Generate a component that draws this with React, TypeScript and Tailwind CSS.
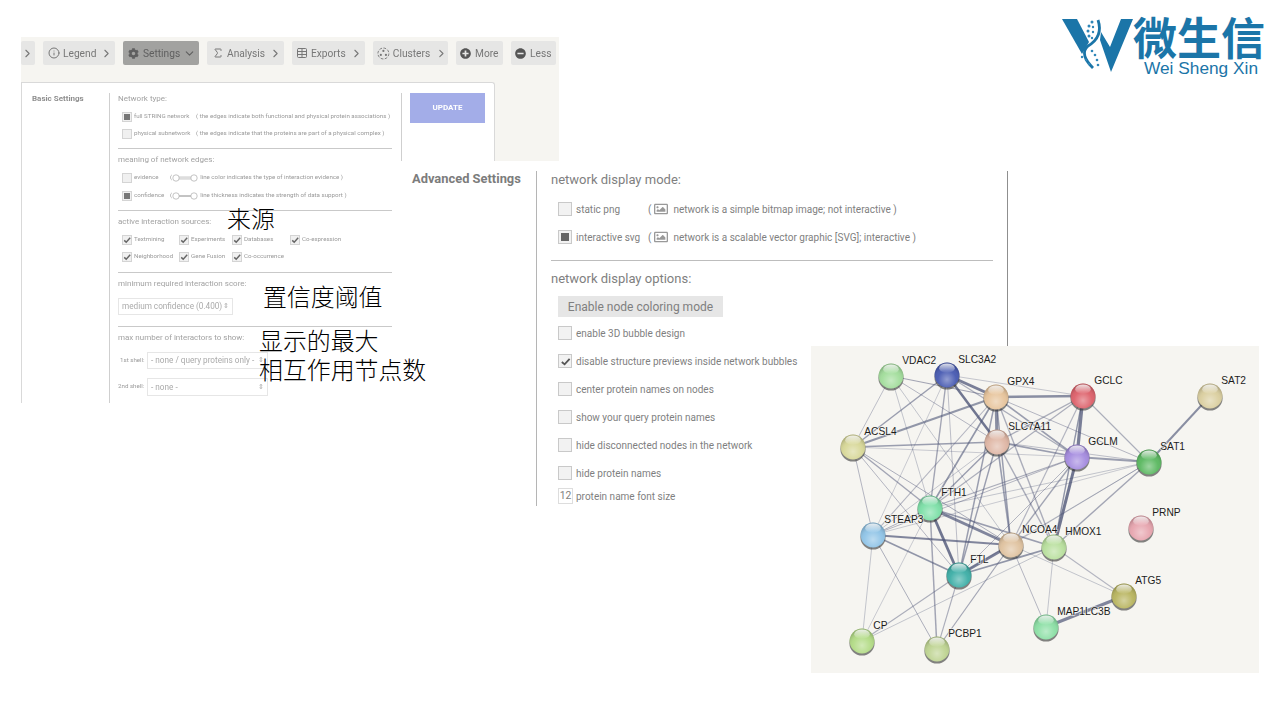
import { ChevronDown, ChevronRight, Info, Sigma, Table } from "lucide-react";
import { FaCog, FaMinusCircle, FaPlusCircle, FaRegImage } from "react-icons/fa";
import type { ReactNode } from "react";

const nodes: Record<string, { x: number; y: number; color: string }> = {
  VDAC2: { x: 891, y: 376, color: "#9fdc98" },
  SLC3A2: { x: 947, y: 375, color: "#4356b0" },
  GPX4: { x: 996, y: 397, color: "#e6c298" },
  GCLC: { x: 1083, y: 396, color: "#dc5c66" },
  SAT2: { x: 1210, y: 396, color: "#d9cd9c" },
  ACSL4: { x: 853, y: 447, color: "#d6d694" },
  SLC7A11: { x: 997, y: 442, color: "#deb4a2" },
  GCLM: { x: 1077, y: 457, color: "#a288de" },
  SAT1: { x: 1149, y: 462, color: "#56b65c" },
  FTH1: { x: 930, y: 508, color: "#78dea4" },
  STEAP3: { x: 873, y: 535, color: "#8cc2e6" },
  FTL: { x: 959, y: 575, color: "#38aca4" },
  NCOA4: { x: 1011, y: 545, color: "#dec09c" },
  HMOX1: { x: 1054, y: 547, color: "#b6de9a" },
  PRNP: { x: 1141, y: 528, color: "#e6a2ac" },
  ATG5: { x: 1124, y: 596, color: "#b6b25a" },
  MAP1LC3B: { x: 1046, y: 627, color: "#88dea2" },
  CP: { x: 862, y: 641, color: "#b0da82" },
  PCBP1: { x: 937, y: 649, color: "#bcd28e" },
};

// from, to, line width, opacity
const edges: [string, string, number, number][] = [
  ["SLC3A2", "GPX4", 3, 0.75],
  ["SLC3A2", "SLC7A11", 2.5, 0.8],
  ["GPX4", "SLC7A11", 3, 0.65],
  ["GCLC", "GCLM", 3.2, 0.75],
  ["GCLM", "HMOX1", 3, 0.8],
  ["GCLC", "HMOX1", 1.4, 0.6],
  ["GPX4", "GCLC", 2.4, 0.65],
  ["FTH1", "NCOA4", 3, 0.7],
  ["FTH1", "FTL", 2.8, 0.8],
  ["FTL", "NCOA4", 3, 0.75],
  ["FTL", "HMOX1", 1.8, 0.6],
  ["STEAP3", "NCOA4", 2, 0.7],
  ["STEAP3", "FTL", 1.6, 0.6],
  ["STEAP3", "FTH1", 1, 0.45],
  ["SAT1", "SAT2", 2, 0.65],
  ["ATG5", "MAP1LC3B", 3, 0.7],
  ["ACSL4", "GPX4", 2, 0.6],
  ["ACSL4", "SLC7A11", 1.6, 0.55],
  ["ACSL4", "FTH1", 1.4, 0.5],
  ["ACSL4", "NCOA4", 1, 0.45],
  ["ACSL4", "FTL", 1, 0.4],
  ["ACSL4", "STEAP3", 1, 0.4],
  ["ACSL4", "GCLM", 0.9, 0.3],
  ["FTH1", "GPX4", 1.6, 0.6],
  ["FTH1", "SLC7A11", 1.4, 0.55],
  ["FTH1", "HMOX1", 1.6, 0.55],
  ["FTH1", "GCLC", 1.2, 0.45],
  ["FTH1", "GCLM", 1.2, 0.45],
  ["FTH1", "SAT1", 0.9, 0.35],
  ["FTL", "GPX4", 1.5, 0.55],
  ["FTL", "SLC7A11", 1.4, 0.55],
  ["FTL", "GCLM", 1, 0.4],
  ["FTL", "SAT1", 0.9, 0.35],
  ["VDAC2", "ACSL4", 1, 0.35],
  ["VDAC2", "GPX4", 1.2, 0.5],
  ["VDAC2", "SLC7A11", 1, 0.4],
  ["VDAC2", "FTH1", 0.9, 0.35],
  ["VDAC2", "NCOA4", 0.9, 0.35],
  ["SLC3A2", "ACSL4", 1.5, 0.55],
  ["SLC3A2", "FTH1", 1.4, 0.5],
  ["SLC3A2", "FTL", 1, 0.35],
  ["SLC3A2", "GCLC", 1, 0.3],
  ["SLC3A2", "GCLM", 1.2, 0.45],
  ["SLC3A2", "STEAP3", 0.9, 0.3],
  ["GPX4", "GCLM", 1.6, 0.55],
  ["GPX4", "NCOA4", 1.5, 0.55],
  ["GPX4", "STEAP3", 1.1, 0.4],
  ["GPX4", "SAT1", 1, 0.4],
  ["GPX4", "HMOX1", 1.4, 0.45],
  ["SLC7A11", "GCLC", 1.4, 0.45],
  ["SLC7A11", "GCLM", 1.6, 0.55],
  ["SLC7A11", "NCOA4", 1.6, 0.55],
  ["SLC7A11", "HMOX1", 1.4, 0.45],
  ["SLC7A11", "STEAP3", 0.9, 0.35],
  ["SLC7A11", "SAT1", 1, 0.35],
  ["GCLC", "SAT1", 1.1, 0.45],
  ["GCLC", "NCOA4", 1.2, 0.4],
  ["GCLM", "SAT1", 1.8, 0.55],
  ["GCLM", "NCOA4", 1.4, 0.5],
  ["GCLM", "STEAP3", 1, 0.4],
  ["SAT1", "NCOA4", 1, 0.35],
  ["SAT1", "STEAP3", 0.9, 0.3],
  ["SAT1", "HMOX1", 1.4, 0.5],
  ["STEAP3", "CP", 0.9, 0.35],
  ["STEAP3", "PCBP1", 1, 0.45],
  ["CP", "FTH1", 0.9, 0.3],
  ["CP", "FTL", 1.1, 0.45],
  ["CP", "HMOX1", 0.9, 0.35],
  ["PCBP1", "FTH1", 1.5, 0.5],
  ["PCBP1", "FTL", 1.1, 0.45],
  ["PCBP1", "NCOA4", 1.2, 0.5],
  ["HMOX1", "ATG5", 1.1, 0.4],
  ["NCOA4", "ATG5", 0.9, 0.35],
  ["NCOA4", "MAP1LC3B", 1, 0.4],
  ["HMOX1", "MAP1LC3B", 0.9, 0.35],
];

function Network() {
  return (
    <svg viewBox="811 346 448 327" className="absolute left-[811px] top-[346px] h-[327px] w-[448px] bg-[#f6f5f1]">
      <defs>
        <radialGradient id="body" cx="0.5" cy="0.68" r="0.62">
          <stop offset="0" stopColor="#fff" stopOpacity="0.42" />
          <stop offset="0.6" stopColor="#fff" stopOpacity="0.06" />
          <stop offset="1" stopColor="#000" stopOpacity="0.2" />
        </radialGradient>
        <linearGradient id="gloss" x1="0" y1="0" x2="0" y2="1">
          <stop offset="0" stopColor="#fff" stopOpacity="0.85" />
          <stop offset="1" stopColor="#fff" stopOpacity="0" />
        </linearGradient>
      </defs>
      {edges.map(([a, b, w, o]) => (
        <line
          key={a + b}
          x1={nodes[a].x}
          y1={nodes[a].y}
          x2={nodes[b].x}
          y2={nodes[b].y}
          stroke="#4f5678"
          strokeWidth={w}
          strokeOpacity={o}
        />
      ))}
      {Object.entries(nodes).map(([name, n]) => (
        <g key={name}>
          <circle cx={n.x} cy={n.y + 2} r={12.6} fill="#333" fillOpacity={0.6} />
          <circle cx={n.x} cy={n.y} r={12.4} fill={n.color} />
          <circle cx={n.x} cy={n.y} r={12.4} fill="url(#body)" />
          <ellipse cx={n.x} cy={n.y - 6.8} rx={7.8} ry={4.8} fill="url(#gloss)" />
        </g>
      ))}
      {Object.entries(nodes).map(([name, n]) => (
        <text
          key={name}
          x={n.x + 11.3}
          y={n.y - 12}
          fontSize="10.2"
          fontFamily="'Liberation Sans', sans-serif"
          fill="#1c1c1c"
          stroke="#f6f5f1"
          strokeOpacity="0.7"
          strokeWidth="1.6"
          paintOrder="stroke"
        >
          {name}
        </text>
      ))}
    </svg>
  );
}

function Logo() {
  return (
    <div className="absolute left-[1062px] top-[12px] h-[68px] w-[206px] text-[#1b75a8]">
      <svg viewBox="1062 12 72 66" className="absolute left-0 top-0 h-[66px] w-[72px]">
        <path d="M1062 19h15l12 23-7 12z" fill="#1b75a8" />
        <path d="M1133 19h-12l-11 28-9-15-1 8 11 32z" fill="#1b75a8" />
        <path d="M1098 20c4 12 0 20-10 26-7 6-3 14 5 22" fill="none" stroke="#1b75a8" strokeWidth="2.8" />
        <g fill="#2f86b8">
          <circle cx="1092" cy="22" r="1.5" />
          <circle cx="1089" cy="26" r="1.5" />
          <circle cx="1093" cy="27" r="1.2" />
          <circle cx="1088" cy="31" r="1.5" />
          <circle cx="1093" cy="32" r="1.2" />
          <circle cx="1089" cy="36" r="1.5" />
          <circle cx="1092" cy="38" r="1.2" />
          <circle cx="1082" cy="57" r="1.2" />
          <circle cx="1092" cy="51" r="1.3" />
          <circle cx="1095" cy="55" r="1.3" />
          <circle cx="1086" cy="60" r="1.2" />
          <circle cx="1097" cy="60" r="1.3" />
          <circle cx="1089" cy="64" r="1.2" />
          <circle cx="1098" cy="65" r="1.3" />
        </g>
      </svg>
      <div className="absolute left-[71px] top-[2px] whitespace-nowrap text-[44px] font-bold leading-[44px] [font-family:'Noto_Sans_CJK_SC',sans-serif]">
        微生信
      </div>
      <div className="absolute left-[82px] top-[47px] whitespace-nowrap text-[17.3px] leading-[18px] [font-family:'Liberation_Sans',sans-serif]">
        Wei Sheng Xin
      </div>
    </div>
  );
}

function ToolButton({ className, children }: { className: string; children: ReactNode }) {
  return (
    <div className={`flex h-[24px] items-center rounded-[2px] bg-[#e6e6e5] text-[10.2px] text-[#777] [&>span]:pt-[2px] ${className}`}>
      {children}
    </div>
  );
}

function ClusterIcon() {
  return (
    <svg viewBox="0 0 14 14" className="size-[13px]" fill="none" stroke="#777">
      <circle cx="7" cy="7" r="6" strokeDasharray="3 1.6" />
      <circle cx="7" cy="4.2" r="1.2" fill="#777" stroke="none" />
      <circle cx="4.2" cy="8.6" r="1.2" fill="#777" stroke="none" />
      <circle cx="9.8" cy="8.6" r="1.2" fill="#777" stroke="none" />
    </svg>
  );
}

function Toolbar() {
  return (
    <div className="flex h-[45px] gap-2 pt-[4px]">
      <ToolButton className="w-[14px]">
        <ChevronRight className="size-[13px]" />
      </ToolButton>
      <ToolButton className="w-[72px] pl-[5px]">
        <Info className="size-[12px]" />
        <span className="ml-[3px]">Legend</span>
        <ChevronRight className="ml-[4px] size-[13px]" />
      </ToolButton>
      <ToolButton className="w-[76px] !bg-[#a2a2a0] pl-[5px] !text-[#5f5f5f]">
        <FaCog className="size-[11px]" />
        <span className="ml-[4px]">Settings</span>
        <ChevronDown className="ml-[3px] size-[13px]" />
      </ToolButton>
      <ToolButton className="w-[77px] pl-[5px]">
        <Sigma className="size-[12px]" />
        <span className="ml-[3px]">Analysis</span>
        <ChevronRight className="ml-[4px] size-[13px]" />
      </ToolButton>
      <ToolButton className="w-[73px] pl-[4px]">
        <Table className="size-[12px]" />
        <span className="ml-[3px]">Exports</span>
        <ChevronRight className="ml-[4px] size-[13px]" />
      </ToolButton>
      <ToolButton className="w-[75px] pl-[4px]">
        <ClusterIcon />
        <span className="ml-[3px]">Clusters</span>
        <ChevronRight className="ml-[5px] size-[13px]" />
      </ToolButton>
      <ToolButton className="w-[47px] pl-[4px]">
        <FaPlusCircle className="size-[11px] text-[#555]" />
        <span className="ml-[4px]">More</span>
      </ToolButton>
      <ToolButton className="w-[45px] pl-[4px]">
        <FaMinusCircle className="size-[11px] text-[#555]" />
        <span className="ml-[4px]">Less</span>
      </ToolButton>
    </div>
  );
}

function SmallBox({ kind }: { kind?: "radio" | "check" }) {
  return (
    <span className="flex size-[10px] shrink-0 items-center justify-center border border-[#d4d4d4] bg-[#f0f0f0]">
      {kind === "radio" && <span className="size-[6px] bg-[#777]" />}
      {kind === "check" && (
        <svg viewBox="0 0 10 10" className="size-[8px]" fill="none" stroke="#666" strokeWidth="1.8">
          <path d="M1.5 5.5l2.5 2.2 5-5.5" />
        </svg>
      )}
    </span>
  );
}

function Toggle({ thick }: { thick?: boolean }) {
  return (
    <svg viewBox="0 0 26 8" className="h-[8px] w-[26px]" fill="#fff" stroke="#aaa" strokeWidth="0.7">
      {thick ? <path d="M4 4h18" stroke="#ddd" strokeWidth="3.5" /> : <path d="M4 4h18" stroke="#888" strokeWidth="1" />}
      <circle cx="4" cy="4" r="3.2" />
      <circle cx="22" cy="4" r="3.2" />
    </svg>
  );
}

function SourceCell({ label, className }: { label: string; className: string }) {
  return (
    <div className={`flex items-center gap-[2px] ${className}`}>
      <SmallBox kind="check" />
      <span>{label}</span>
    </div>
  );
}

function SelectBox({ label, className }: { label: string; className: string }) {
  return (
    <div className={`flex items-center justify-between border border-[#e6e6e6] bg-white px-[3px] text-[8.2px] text-[#aaa] ${className}`}>
      <span className="whitespace-nowrap">{label}</span>
      <span className="text-[7px] leading-none">⇕</span>
    </div>
  );
}

function BasicSettings() {
  const title = "h-[10px] text-[8px] leading-[12px] text-[#a2a2a2] whitespace-nowrap";
  const row = "flex h-[17px] items-center whitespace-nowrap pl-[4px]";
  const section = "border-b border-[#c9c9c9]";
  return (
    <div className="flex h-[321px] w-[474px] rounded-tr-[3px] border-r border-t border-l border-[#d9d9d9] bg-white pt-[10px]">
      <div className="w-[87px] pl-[10px] text-[8px] font-bold leading-[11px] text-[#8f8f8f]">Basic Settings</div>
      <div className="w-[292px] border-l border-[#cfcfcf] pl-[8px] text-[6.2px] text-[#9a9a9a]">
        <div className="w-[274px]">
          <div className={`h-[56px] ${section}`}>
            <div className={title}>Network type:</div>
            <div className={`mt-[5px] ${row}`}>
              <SmallBox kind="radio" />
              <span className="ml-[2px] w-[62px]">full STRING network</span>
              <span>( the edges indicate both functional and physical protein associations )</span>
            </div>
            <div className={row}>
              <SmallBox />
              <span className="ml-[2px] w-[62px]">physical subnetwork</span>
              <span>( the edges indicate that the proteins are part of a physical complex )</span>
            </div>
          </div>
          <div className={`h-[62px] pt-[5px] ${section}`}>
            <div className={title}>meaning of network edges:</div>
            <div className={`mt-[5px] h-[18px] ${row}`}>
              <SmallBox />
              <span className="ml-[2px] w-[36px]">evidence</span>
              <span>(</span>
              <Toggle thick />
              <span className="ml-[2px]">line color indicates the type of interaction evidence )</span>
            </div>
            <div className={`h-[18px] ${row}`}>
              <SmallBox kind="radio" />
              <span className="ml-[2px] w-[36px]">confidence</span>
              <span>(</span>
              <Toggle />
              <span className="ml-[2px]">line thickness indicates the strength of data support )</span>
            </div>
          </div>
          <div className={`h-[62px] pt-[5px] ${section}`}>
            <div className={title}>active interaction sources:</div>
            <div className={`mt-[5px] ${row}`}>
              <SourceCell label="Textmining" className="w-[57px]" />
              <SourceCell label="Experiments" className="w-[53px]" />
              <SourceCell label="Databases" className="w-[58px]" />
              <SourceCell label="Co-expression" className="" />
            </div>
            <div className={row}>
              <SourceCell label="Neighborhood" className="w-[57px]" />
              <SourceCell label="Gene Fusion" className="w-[53px]" />
              <SourceCell label="Co-occurrence" className="" />
            </div>
          </div>
          <div className={`h-[54px] pt-[5px] ${section}`}>
            <div className={title}>minimum required interaction score:</div>
            <SelectBox label="medium confidence (0.400)" className="mt-[10px] h-[17px] w-[115px]" />
          </div>
          <div className="pt-[5px]">
            <div className={title}>max number of interactors to show:</div>
            <div className="mt-[10px] flex h-[17px] items-center">
              <span className="w-[29px] pl-[2px]">1st shell:</span>
              <SelectBox label="- none / query proteins only -" className="h-[17px] w-[121px]" />
            </div>
            <div className="mt-[9px] flex h-[18px] items-center">
              <span className="w-[29px]">2nd shell:</span>
              <SelectBox label="- none -" className="h-[18px] w-[121px]" />
            </div>
          </div>
        </div>
      </div>
      <div className="flex-1 border-l border-[#cfcfcf] pl-[8px]">
        <div className="flex h-[30px] w-[75px] items-center justify-center bg-[#a3ade8] text-[8px] font-bold text-white">UPDATE</div>
      </div>
    </div>
  );
}

function BigBox({ kind }: { kind?: "radio" | "check" }) {
  return (
    <span className="ml-[7px] flex size-[14px] shrink-0 items-center justify-center border border-[#c9c9c9] bg-[#f2f2f2]">
      {kind === "radio" && <span className="size-[8px] bg-[#666]" />}
      {kind === "check" && (
        <svg viewBox="0 0 12 12" className="size-[11px]" fill="none" stroke="#555" strokeWidth="2">
          <path d="M2 6.5l3 2.6 5.5-6" />
        </svg>
      )}
    </span>
  );
}

function Mode({ label, note, kind }: { label: string; note: string; kind?: "radio" }) {
  return (
    <div className="flex h-[28px] items-center whitespace-nowrap">
      <BigBox kind={kind} />
      <span className="ml-[4px] w-[72px]">{label}</span>
      <span>(</span>
      <FaRegImage className="ml-[3px] size-[14px] text-[#999]" />
      <span className="ml-[5px]">{note}</span>
    </div>
  );
}

function Option({ label, kind }: { label: string; kind?: "check" }) {
  return (
    <div className="flex h-[28px] items-center whitespace-nowrap">
      <BigBox kind={kind} />
      <span className="ml-[4px]">{label}</span>
    </div>
  );
}

function AdvancedSettings() {
  return (
    <div className="absolute left-[396px] top-[161px] flex h-[345px] w-[612px] bg-white pt-[10px] [font-family:Roboto,sans-serif]">
      <div className="w-[140px] pl-[16px] text-[12.9px] font-bold leading-[16px] text-[#7c7c7c]">Advanced Settings</div>
      <div className="flex-1 border-l border-r border-l-[#b5b5b5] border-r-[#8f8f8f] pl-[14px] pt-[1px] text-[10px] text-[#7f7f7f]">
        <div className="w-[442px]">
          <div className="h-[23px] text-[13px] leading-[16px]">network display mode:</div>
          <Mode label="static png" note="network is a simple bitmap image; not interactive )" />
          <Mode label="interactive svg" note="network is a scalable vector graphic [SVG]; interactive )" kind="radio" />
          <div className="mt-[9px] border-t border-[#bdbdbd]" />
          <div className="mt-[10px] h-[16px] text-[13px] leading-[16px]">network display options:</div>
          <div className="ml-[7px] mt-[9px] flex h-[21px] w-[165px] items-center justify-center bg-[#e6e6e6] text-[12px]">Enable node coloring mode</div>
          <div className="mt-[2px]">
            <Option label="enable 3D bubble design" />
            <Option label="disable structure previews inside network bubbles" kind="check" />
            <Option label="center protein names on nodes" />
            <Option label="show your query protein names" />
            <Option label="hide disconnected nodes in the network" />
            <Option label="hide protein names" />
          </div>
          <div className="flex h-[18px] items-center">
            <span className="ml-[7px] flex h-[16px] w-[15px] items-center justify-center border border-[#ddd] text-[10.4px]">12</span>
            <span className="ml-[3px]">protein name font size</span>
          </div>
        </div>
      </div>
    </div>
  );
}

function Note({ className, children }: { className: string; children: ReactNode }) {
  return (
    <div className={`absolute whitespace-nowrap text-[23.9px] font-light leading-[29px] text-black [font-family:'Noto_Sans_CJK_SC',sans-serif] ${className}`}>
      {children}
    </div>
  );
}

export default function App() {
  return (
    <div className="relative h-[720px] w-[1280px] overflow-hidden bg-white">
      <div className="absolute left-[21px] top-[37px] h-[366px] w-[538px] overflow-hidden bg-[#f6f5f1] blur-[0.35px] [font-family:Roboto,sans-serif]">
        <Toolbar />
        <BasicSettings />
      </div>
      <AdvancedSettings />
      <Network />
      <Logo />
      <Note className="left-[227px] top-[203px]">来源</Note>
      <Note className="left-[263px] top-[281px]">置信度阈值</Note>
      <Note className="left-[259px] top-[325px]">
        显示的最大
        <br />
        相互作用节点数
      </Note>
    </div>
  );
}
